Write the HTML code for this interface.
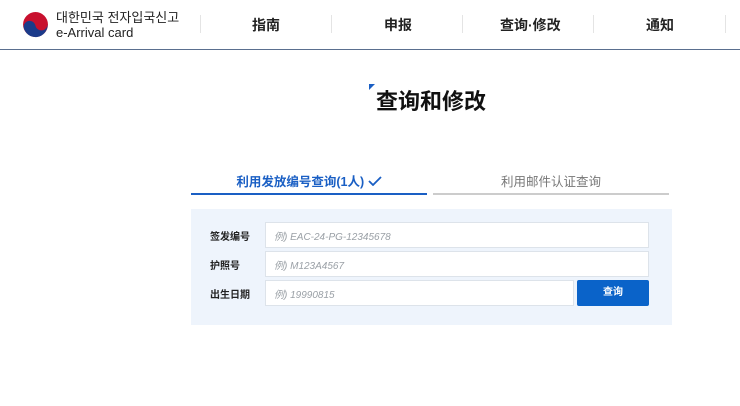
<!DOCTYPE html>
<html><head><meta charset="utf-8"><style>
*{margin:0;padding:0;box-sizing:border-box}
body{width:740px;height:406px;background:#fff;font-family:"Liberation Sans","Noto Sans CJK SC",sans-serif;position:relative;overflow:hidden;color:#111}
.hdr{position:absolute;left:0;top:0;width:740px;height:50px;border-bottom:1px solid #5a6f8f}
.sep{position:absolute;top:15px;width:1px;height:18px;background:#e4e4e4}
.nav{position:absolute;top:15px;font-size:14px;font-weight:bold;color:#222}
.abs{position:absolute}
.inp{position:absolute;left:265px;width:384px;height:26px;background:#fff;border:1px solid #dde3ea;font-size:10px;font-style:italic;color:#9aa0a6;padding-left:8px;display:flex;align-items:center}
.lbl{position:absolute;left:210px;font-size:10px;font-weight:bold;color:#222}
</style></head><body>
<div class="hdr">
<svg class="abs" style="left:22px;top:11px" width="27" height="27" viewBox="0 0 26 26">
<circle cx="13" cy="13" r="12" fill="#c8102e"/>
<path d="M1.5 15 A5.8 5.8 0 0 1 12.8 13.5 A5.8 5.8 0 0 0 24.5 12 A11.5 11.5 0 0 1 1.5 15Z" fill="#1b3b8a"/>
</svg>
<div class="abs" style="left:56px;top:10px;font-size:13px;color:#222;line-height:15px;font-family:'Liberation Sans','Noto Sans CJK KR',sans-serif">대한민국 전자입국신고<br>e-Arrival card</div>
<div class="sep" style="left:200px"></div><div class="sep" style="left:331px"></div><div class="sep" style="left:462px"></div><div class="sep" style="left:593px"></div><div class="sep" style="left:725px"></div>
<div class="nav" style="left:252px">指南</div>
<div class="nav" style="left:384px">申报</div>
<div class="nav" style="left:500px">查询·修改</div>
<div class="nav" style="left:646px">通知</div>
</div>
<svg class="abs" style="left:369px;top:84px" width="6" height="6"><path d="M0 0H6L0 6Z" fill="#1a5fc4"/></svg>
<div class="abs" style="left:376px;top:84px;font-size:22px;font-weight:bold;color:#111">查询和修改</div>
<div class="abs" style="left:191px;top:171px;width:236px;text-align:center;font-size:12.5px;font-weight:bold;color:#1a5fc4">利用发放编号查询(1人) <svg width="14" height="10" viewBox="0 0 14 10" style="vertical-align:0"><path d="M1 5L5 9L13 1" fill="none" stroke="#1a5fc4" stroke-width="1.8"/></svg></div>
<div class="abs" style="left:191px;top:193px;width:236px;height:2px;background:#1a5fc4"></div>
<div class="abs" style="left:433px;top:171px;width:236px;text-align:center;font-size:12.5px;color:#777">利用邮件认证查询</div>
<div class="abs" style="left:433px;top:193px;width:236px;height:2px;background:#ccc"></div>
<div class="abs" style="left:191px;top:209px;width:481px;height:116px;background:#eef4fc"></div>
<div class="lbl" style="top:228px">签发编号</div>
<div class="lbl" style="top:257px">护照号</div>
<div class="lbl" style="top:286px">出生日期</div>
<div class="inp" style="top:222px">例) EAC-24-PG-12345678</div>
<div class="inp" style="top:251px">例) M123A4567</div>
<div class="inp" style="top:280px;width:309px">例) 19990815</div>
<div class="abs" style="left:577px;top:280px;width:72px;height:26px;background:#0a63c9;border-radius:2px;color:#fff;font-size:10px;font-weight:bold;text-align:center;line-height:26px">查询</div>
</body></html>
